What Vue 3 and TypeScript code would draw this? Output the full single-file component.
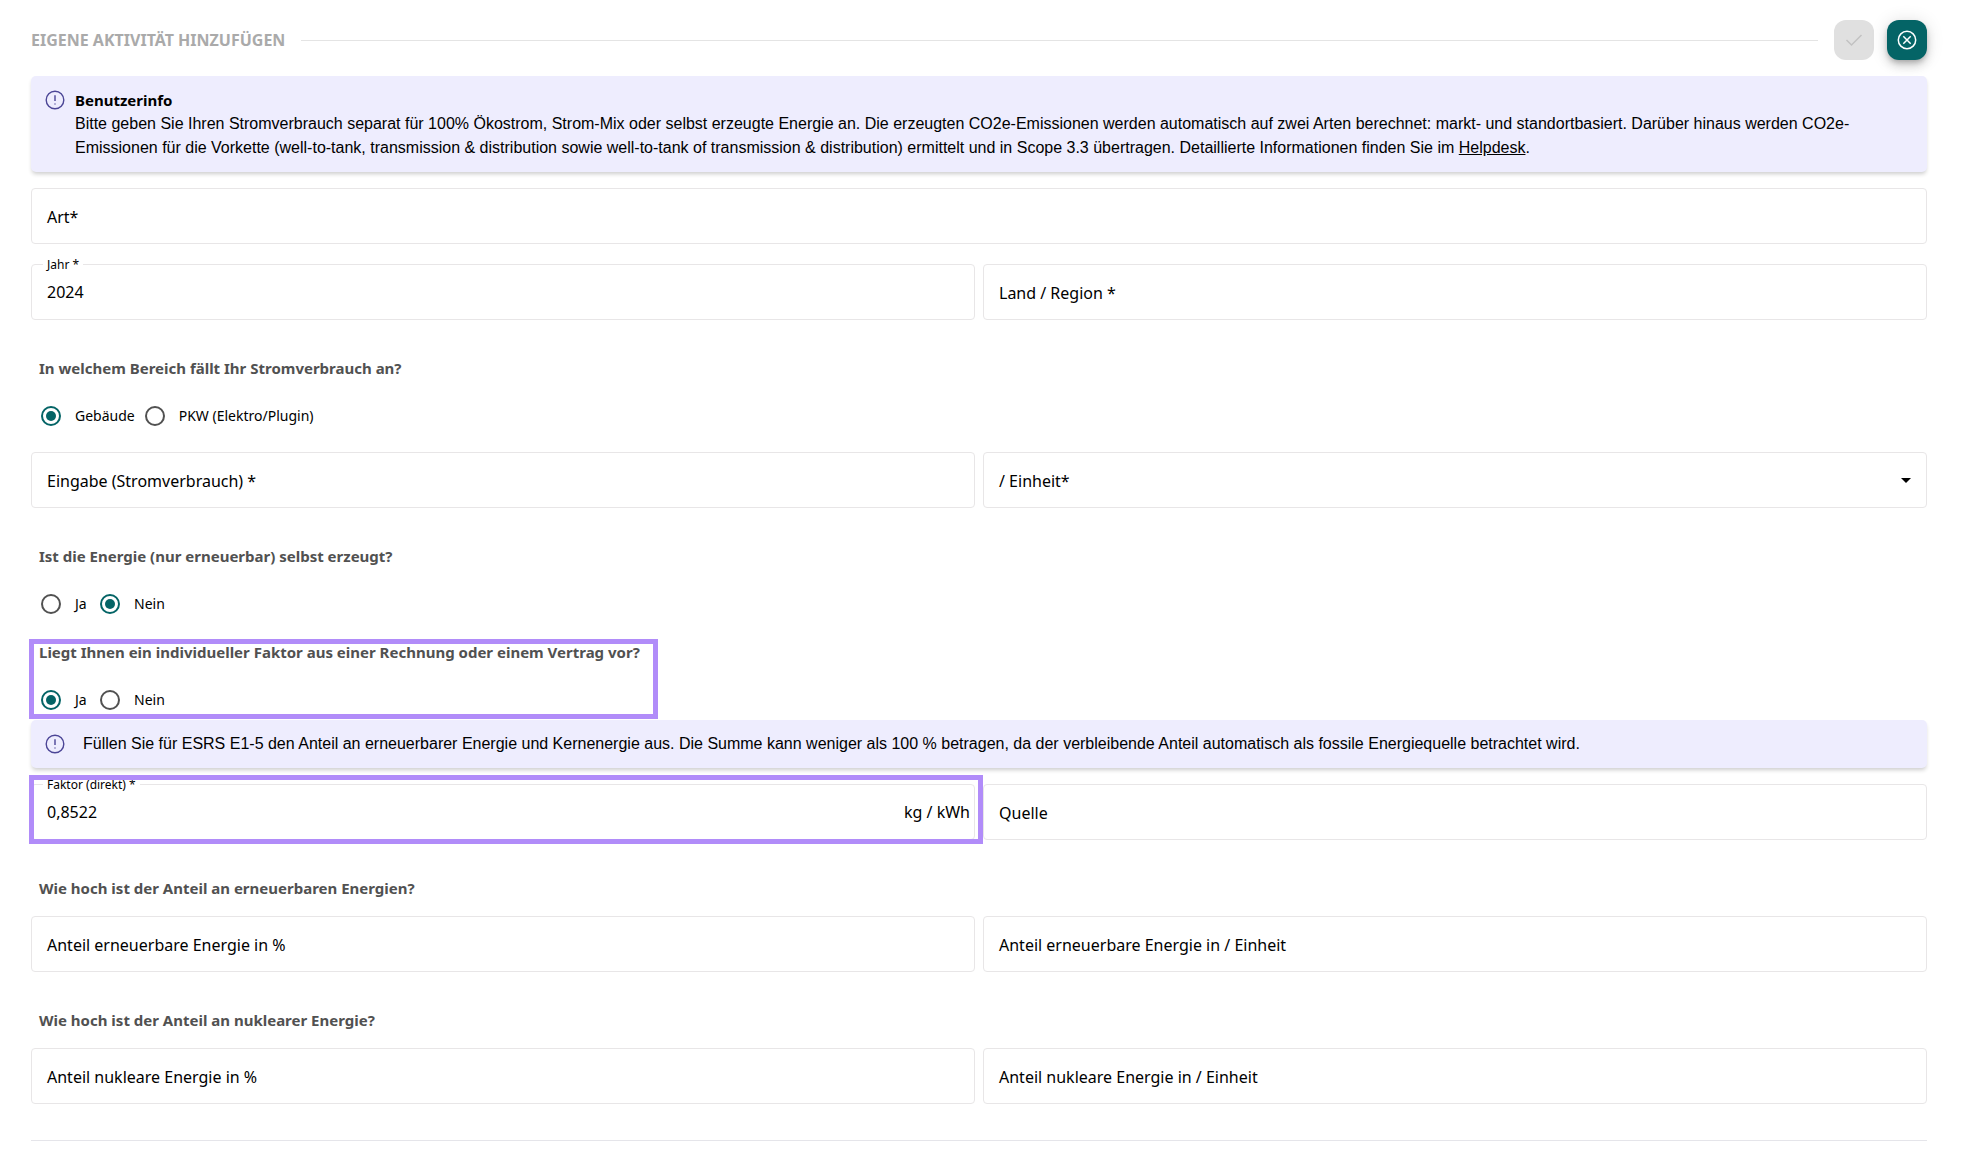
<script setup lang="ts">
import { ref } from 'vue'

const art = ref('')
const year = ref('2024')
const region = ref('')
const area = ref('building')
const consumption = ref('')
const unit = ref('')
const selfProduced = ref('no')
const ownFactor = ref('yes')
const factor = ref('0,8522')
const source = ref('')

interface ShareField {
  id: string
  label: string
  value: string
}

const shares = ref<{ title: string; fields: ShareField[] }[]>([
  {
    title: 'Wie hoch ist der Anteil an erneuerbaren Energien?',
    fields: [
      { id: 'renewable-percent', label: 'Anteil erneuerbare Energie in %', value: '' },
      { id: 'renewable-unit', label: 'Anteil erneuerbare Energie in / Einheit', value: '' },
    ],
  },
  {
    title: 'Wie hoch ist der Anteil an nuklearer Energie?',
    fields: [
      { id: 'nuclear-percent', label: 'Anteil nukleare Energie in %', value: '' },
      { id: 'nuclear-unit', label: 'Anteil nukleare Energie in / Einheit', value: '' },
    ],
  },
])
</script>

<template>
  <main class="page">
    <header class="header">
      <h1 class="title">EIGENE AKTIVITÄT HINZUFÜGEN</h1>
      <span class="rule"></span>
      <div class="actions">
        <button class="action" type="button" disabled aria-label="Speichern">
          <svg viewBox="0 0 24 24" width="24" height="24" aria-hidden="true">
            <path d="M4.5 12 9.5 17 19.5 7" />
          </svg>
        </button>
        <button class="action primary" type="button" aria-label="Schließen">
          <svg viewBox="0 0 24 24" width="24" height="24" aria-hidden="true">
            <circle cx="12" cy="12" r="8.7" />
            <path d="M8.3 8.3 15.7 15.7M15.7 8.3 8.3 15.7" />
          </svg>
        </button>
      </div>
    </header>

    <form class="form" @submit.prevent>
      <section class="info">
        <svg class="info-icon" viewBox="0 0 24 24" width="24" height="24" aria-hidden="true">
          <circle cx="12" cy="12" r="8.8" />
          <path d="M12 7.2V13M12 15.4V16.6" />
        </svg>
        <div>
          <h2 class="info-title">Benutzerinfo</h2>
          <p>
            Bitte geben Sie Ihren Stromverbrauch separat für 100% Ökostrom, Strom-Mix oder selbst erzeugte Energie an. Die erzeugten CO2e-Emissionen werden automatisch auf zwei Arten berechnet: markt- und standortbasiert. Darüber hinaus werden CO2e-<br />Emissionen für die Vorkette (well-to-tank, transmission &amp; distribution sowie well-to-tank of transmission &amp; distribution) ermittelt und in Scope 3.3 übertragen. Detaillierte Informationen finden Sie im <a href="#helpdesk">Helpdesk</a>.
          </p>
        </div>
      </section>

      <div class="field first">
        <input id="art" v-model="art" type="text" />
        <label for="art">Art*</label>
      </div>

      <div class="row second">
        <div class="field floating">
          <input id="year" v-model="year" type="text" />
          <label for="year">Jahr *</label>
        </div>
        <div class="field">
          <input id="region" v-model="region" type="text" />
          <label for="region">Land / Region *</label>
        </div>
      </div>

      <fieldset class="question spaced">
        <legend>In welchem Bereich fällt Ihr Stromverbrauch an?</legend>
        <div class="options">
          <label><input v-model="area" type="radio" name="area" value="building" />Gebäude</label>
          <label><input v-model="area" type="radio" name="area" value="car" />PKW (Elektro/Plugin)</label>
        </div>
      </fieldset>

      <div class="row">
        <div class="field">
          <input id="consumption" v-model="consumption" type="text" />
          <label for="consumption">Eingabe (Stromverbrauch) *</label>
        </div>
        <div class="field">
          <select id="unit" v-model="unit">
            <option value=""></option>
            <option value="kWh">kWh</option>
          </select>
          <label for="unit">/ Einheit*</label>
          <svg class="caret" viewBox="0 0 10 5" width="10" height="5" aria-hidden="true">
            <path d="M0 0H10L5 5Z" />
          </svg>
        </div>
      </div>

      <fieldset class="question spaced">
        <legend>Ist die Energie (nur erneuerbar) selbst erzeugt?</legend>
        <div class="options">
          <label><input v-model="selfProduced" type="radio" name="self" value="yes" />Ja</label>
          <label><input v-model="selfProduced" type="radio" name="self" value="no" />Nein</label>
        </div>
      </fieldset>

      <div class="group marked">
        <fieldset class="question">
          <legend>Liegt Ihnen ein individueller Faktor aus einer Rechnung oder einem Vertrag vor?</legend>
          <div class="options">
            <label><input v-model="ownFactor" type="radio" name="factor" value="yes" />Ja</label>
            <label><input v-model="ownFactor" type="radio" name="factor" value="no" />Nein</label>
          </div>
        </fieldset>
      </div>

      <section class="info hint">
        <svg class="info-icon" viewBox="0 0 24 24" width="24" height="24" aria-hidden="true">
          <circle cx="12" cy="12" r="8.8" />
          <path d="M12 7.2V13M12 15.4V16.6" />
        </svg>
        <p>Füllen Sie für ESRS E1-5 den Anteil an erneuerbarer Energie und Kernenergie aus. Die Summe kann weniger als 100 % betragen, da der verbleibende Anteil automatisch als fossile Energiequelle betrachtet wird.</p>
      </section>

      <div class="row">
        <div class="field floating marked">
          <input id="factor" v-model="factor" type="text" />
          <label for="factor">Faktor (direkt) *</label>
          <span class="suffix">kg / kWh</span>
        </div>
        <div class="field">
          <input id="source" v-model="source" type="text" />
          <label for="source">Quelle</label>
        </div>
      </div>

      <section v-for="share in shares" :key="share.title" class="share">
        <h2>{{ share.title }}</h2>
        <div class="row">
          <div v-for="field in share.fields" :key="field.id" class="field">
            <input :id="field.id" v-model="field.value" type="text" />
            <label :for="field.id">{{ field.label }}</label>
          </div>
        </div>
      </section>
    </form>
    <hr class="end" />
  </main>
</template>

<style>
body {
  margin: 0;
  background: #fff;
}
</style>

<style scoped>
* {
  box-sizing: border-box;
}

.page {
  padding: 20px 41px 19px 31px;
  font-family: "Noto Sans", sans-serif;
  font-size: 16px;
  line-height: 24px;
  color: #000;
}

h1,
h2,
p {
  margin: 0;
}

.header {
  display: flex;
  align-items: center;
  gap: 16px;
  margin-bottom: 16px;
}

.title {
  font-size: 16px;
  font-weight: 700;
  color: #aaa;
}

.rule {
  flex: 1;
  height: 1px;
  background: #e4e4e4;
}

.actions {
  display: flex;
  gap: 13px;
}

.action {
  display: grid;
  place-items: center;
  width: 40px;
  height: 40px;
  padding: 0;
  border: 0;
  border-radius: 12px;
  background: #e0e0e0;
}

.action svg {
  fill: none;
  stroke: #c2c2c2;
  stroke-width: 1.5;
}

.action.primary {
  background: #046466;
  box-shadow: 0 3px 5px -1px rgba(0, 0, 0, 0.2), 0 6px 10px rgba(0, 0, 0, 0.14), 0 1px 18px rgba(0, 0, 0, 0.12);
}

.action.primary svg {
  stroke: #fff;
}

.info {
  position: relative;
  display: flex;
  gap: 8px;
  padding: 12px;
  border-radius: 5px;
  background: #eeedfe;
  box-shadow: 0 3px 4px -1px rgba(0, 0, 0, 0.2);
}

.info p {
  font-family: "Liberation Sans", Arial, sans-serif;
}

.info.hint {
  gap: 16px;
  margin-bottom: 16px;
}

.info-icon {
  flex: none;
  fill: none;
  stroke: #4b4596;
  stroke-width: 1.4;
}

.info-title {
  font-size: 15px;
  font-weight: 700;
}

.info a {
  color: inherit;
  text-decoration: underline;
}

.row {
  display: grid;
  grid-template-columns: 1fr 1fr;
  gap: 8px;
}

.field {
  position: relative;
  display: grid;
  align-items: center;
  height: 56px;
  border: 1px solid #e8e6e7;
  border-radius: 4px;
}

.field.first {
  margin-top: 16px;
}

.row.second {
  margin-top: 20px;
}

.field > * {
  grid-area: 1 / 1;
}

.field input,
.field select {
  width: 100%;
  height: 100%;
  padding: 0 15px;
  border: 0;
  outline: 0;
  appearance: none;
  background: transparent;
  font: inherit;
  color: inherit;
}

.field label {
  padding: 2px 0 0 15px;
  pointer-events: none;
}

.field.floating label {
  position: absolute;
  top: -8px;
  left: 11px;
  padding: 0 4px;
  background: #fff;
  font-size: 12px;
  line-height: 16px;
}

.caret {
  justify-self: end;
  margin-right: 15px;
  pointer-events: none;
}

.suffix {
  justify-self: end;
  margin-right: 4px;
}

.question {
  min-width: 0;
  margin: 0;
  padding: 0;
  border: 0;
}

.question.spaced {
  margin: 36px 0 16px;
}

.question legend,
.share h2 {
  margin-bottom: 16px;
  padding: 0 8px;
  font-size: 15px;
  font-weight: 700;
  color: #515151;
}

.options {
  display: flex;
}

.options label {
  display: flex;
  align-items: center;
  min-width: 59px;
  font-size: 14px;
}

.options input {
  display: grid;
  place-items: center;
  width: 20px;
  height: 20px;
  margin: 10px 14px 10px 10px;
  border: 2px solid #515151;
  border-radius: 50%;
  appearance: none;
}

.options input:checked {
  border-color: #046466;
}

.options input:checked::before {
  width: 10px;
  height: 10px;
  border-radius: 50%;
  background: #046466;
  content: "";
}

.group {
  position: relative;
  width: fit-content;
  padding-right: 10px;
}

.marked::after {
  position: absolute;
  z-index: 1;
  inset: -1px 0 1px -2px;
  border: 5px solid #b18cf9;
  pointer-events: none;
  content: "";
}

.field.marked::after {
  inset: -10px -9px -5px -3px;
}

.share {
  margin-top: 36px;
}

.end {
  height: 1px;
  margin: 36px 0 0;
  border: 0;
  background: #e5e5ea;
}
</style>
